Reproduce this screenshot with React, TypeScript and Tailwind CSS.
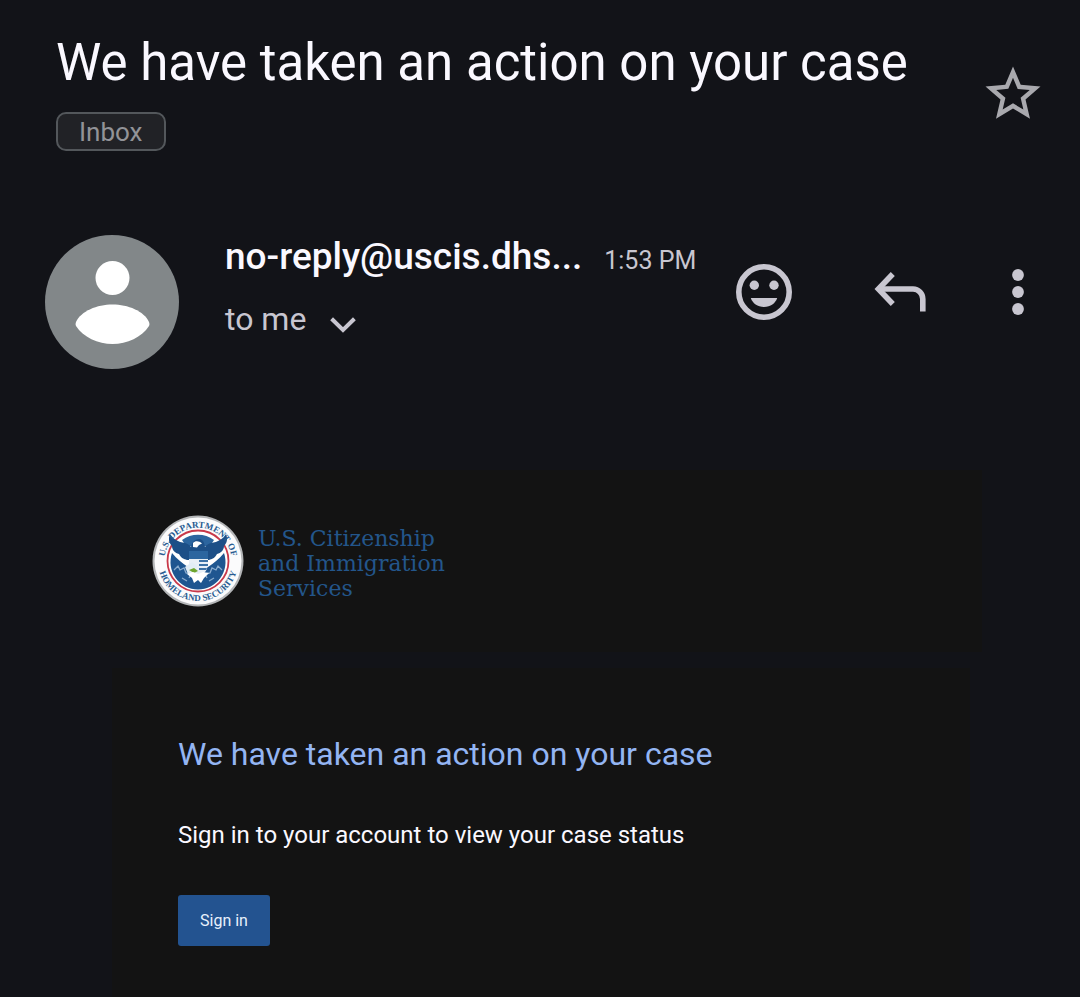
import React from "react";

const ChevronIcon = () => (
  <svg viewBox="0 0 26 16" className="w-[26px] h-4" fill="none" stroke="currentColor" strokeWidth="4">
    <path d="M1.6 1.8L13 13L24.4 1.8" />
  </svg>
);

const StarIcon = () => (
  <svg viewBox="0 0 24 24" className="w-[66px] h-[66px]" fill="currentColor">
    <path d="M22 9.24l-7.19-.62L12 2 9.19 8.63 2 9.24l5.46 4.73L5.82 21 12 17.27 18.18 21l-1.63-7.03L22 9.24zM12 15.4l-3.76 2.27 1-4.28-3.32-2.88 4.38-.38L12 6.1l1.71 4.04 4.38.38-3.32 2.88 1 4.28L12 15.4z" />
  </svg>
);

const SmileIcon = () => (
  <svg viewBox="0 0 56 56" className="w-14 h-14" fill="currentColor">
    <circle cx="28" cy="28" r="25.2" fill="none" stroke="currentColor" strokeWidth="5.6" />
    <circle cx="18.3" cy="21.3" r="4.7" />
    <circle cx="38" cy="21.3" r="4.7" />
    <path d="M14.8 34H41.2C39.5 39.2 34.5 43 28 43S16.5 39.2 14.8 34z" />
  </svg>
);

const ReplyIcon = () => (
  <svg viewBox="0 0 52 40" className="w-[52px] h-10" fill="none" stroke="currentColor" strokeWidth="5.6">
    <path d="M18.8 2L4.4 17L18.8 32" />
    <path d="M4.6 17H39C44.5 17 48.8 21.5 48.8 27V39.5" />
  </svg>
);

const MoreIcon = () => (
  <svg viewBox="0 0 12 48" className="w-3 h-12" fill="currentColor">
    <circle cx="6" cy="7" r="5.9" />
    <circle cx="6" cy="24" r="5.9" />
    <circle cx="6" cy="41" r="5.9" />
  </svg>
);

const Avatar = () => (
  <svg viewBox="0 0 134 134" className="w-[134px] h-[134px] shrink-0">
    <circle cx="67" cy="67" r="67" fill="#828789" />
    <circle cx="67.5" cy="43" r="17" fill="#fff" />
    <path d="M31 87C36 76 52 69.5 67.5 69.5S99 76 104 87C104.6 89 104.6 89.5 104 91C97 102 82 109 67.5 109S38 102 31 91C30.4 89.5 30.4 89 31 87z" fill="#fff" />
  </svg>
);

const Seal = () => (
  <svg viewBox="0 0 92 92" className="w-[92px] h-[92px] shrink-0">
    <defs>
      <path id="seal-upper" d="M12.5 50A33.7 33.7 0 1 1 79.5 50" />
      <path id="seal-lower" d="M6 46A40 40 0 0 0 86 46" />
    </defs>
    <circle cx="46" cy="46" r="45.5" fill="#b4b6b8" />
    <circle cx="46" cy="46" r="43.5" fill="#fbfbfc" />
    <circle cx="46" cy="46" r="30.5" fill="#fff" stroke="#c8394a" strokeWidth="1.8" />
    {/* sky behind the eagle's head, land and sea below */}
    <path d="M30 25A27 27 0 0 1 62 25L58 31H34z" fill="#2c659f" />
    <path d="M20 38C25 44 30 48 36 52L46 56L56 52C62 48 67 44 72 38A27.5 27.5 0 1 1 20 38z" fill="#1f5690" />
    <path d="M22 55l4-4 2 4 4-2 2 5 5 1-2 4M70 55l-4-4-2 4-4-2-2 5-5 1 2 4M30 63l5 3M62 63l-5 3" fill="none" stroke="#8aacce" strokeWidth="1.3" />
    {/* eagle */}
    <path d="M18 19C21 24 26 27 33 28C36 29 38 30 39 32C40 27 43 24 47 24C50 24 52 26 53 32C54 30 56 29 59 28C66 27 71 24 74 19C76 24 75 28 72 31C72 35 69 38 65 39C63 43 60 44 57 45H35C32 44 29 43 27 39C23 38 20 35 20 31C17 28 16 24 18 19z" fill="#1d4f87" />
    <path d="M41 28C43 25.5 47 25.5 50 28.5L47 30L45 32.5L41 32z" fill="#fff" />
    {/* shield */}
    <path d="M37 36H56V48C56 56 51 60 46 62C41 60 37 56 37 48z" fill="#e8eff6" />
    <path d="M37 36H56V44H37z" fill="#2c659f" />
    <path d="M47 45H56V47H47zM47 49H56V51H47zM47 53H55L54 55H47z" fill="#3d72a6" />
    <path d="M33 52L40 47L45 51L44 57L36 59z" fill="#e2edf5" />
    <path d="M37 55l5-2 4 3-4 2z" fill="#6ea52f" />
    <path d="M35 59L41 57L46 59L51 57L57 58L52 63L49 68L46 65L42 68L40 63z" fill="#fff" />
    <g fill="#285c91" fontFamily="Liberation Serif, serif" fontWeight="700" fontSize="9" textAnchor="middle">
      <text>
        <textPath href="#seal-upper" startOffset="50%">U.S. DEPARTMENT OF</textPath>
      </text>
      <text>
        <textPath href="#seal-lower" startOffset="50%">HOMELAND SECURITY</textPath>
      </text>
    </g>
  </svg>
);

export default function App() {
  return (
    <div className="min-h-screen flex flex-col bg-[#121318] text-[#c8c6d0] font-[Roboto,sans-serif]">
      <header className="flex justify-between items-start pt-[33px] pl-14 pr-[34px]">
        <div>
          <h1 className="text-[51px] leading-[60px] text-[#faf8ff]">We have taken an action on your case</h1>
          <span className="mt-[19px] flex w-fit h-[39px] items-center rounded-[10px] border-2 border-[#53575b] bg-[#212226] px-[21px] text-[26px] leading-8 text-[#929397]">
            Inbox
          </span>
        </div>
        <button aria-label="Star" className="mt-7 text-[#a9a9ae]">
          <StarIcon />
        </button>
      </header>

      <section className="flex items-start mt-[84px] pl-[45px] pr-14">
        <Avatar />
        <div className="ml-[46px] flex-1 min-w-0">
          <div className="flex items-baseline gap-[22px]">
            <span className="text-[37px] leading-[44px] font-medium text-[#faf8ff]">no-reply@uscis.dhs...</span>
            <span className="text-[25px] leading-8 whitespace-nowrap">1:53 PM</span>
          </div>
          <button className="mt-5 flex items-center gap-6 text-[32px] leading-10">
            to me
            <span className="mt-3">
              <ChevronIcon />
            </span>
          </button>
        </div>
        <div className="flex items-center mt-[29px]">
          <button aria-label="Add reaction">
            <SmileIcon />
          </button>
          <button aria-label="Reply" className="ml-[82px]">
            <ReplyIcon />
          </button>
          <button aria-label="More options" className="ml-[86px]">
            <MoreIcon />
          </button>
        </div>
      </section>

      <main className="flex-1 flex flex-col mt-[101px] pl-[100px] pr-[98px]">
        <div className="flex items-center gap-[14px] bg-[#131313] px-[52px] py-[45px]">
          <Seal />
          <div className="pt-1 text-[22px] leading-[25px] text-[#23568b] font-['DejaVu_Serif',serif]">
            U.S. Citizenship
            <br />
            and Immigration
            <br />
            Services
          </div>
        </div>
        <article className="flex-1 mt-4 mx-3 bg-[#131313] px-[66px] pt-[66px] pb-[51px]">
          <h2 className="text-[32px] leading-10 text-[#93b5f3]">We have taken an action on your case</h2>
          <p className="mt-[45px] text-[24px] leading-8 text-[#faf8ff]">
            Sign in to your account to view your case status
          </p>
          <a
            href="#"
            className="mt-11 flex w-fit h-[51px] items-center rounded-[3px] bg-[#235390] px-[22px] text-base text-[#e8f1fc]"
          >
            Sign in
          </a>
        </article>
      </main>
    </div>
  );
}
